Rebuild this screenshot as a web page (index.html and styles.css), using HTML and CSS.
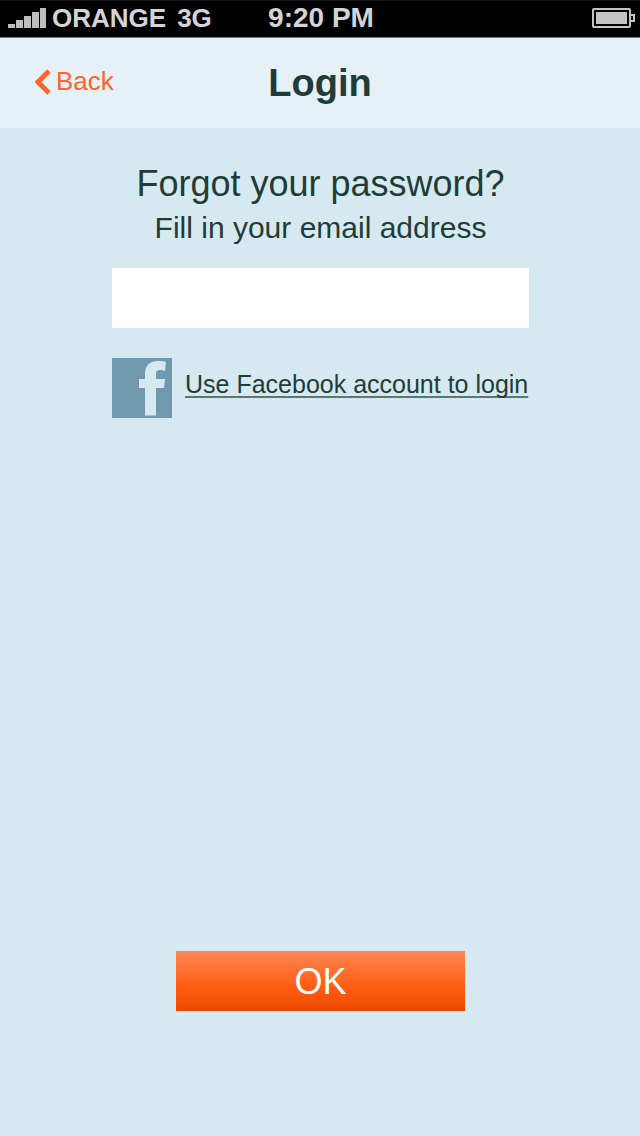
FILE: index.html
```html
<!DOCTYPE html>
<html lang="en">
<head>
<meta charset="utf-8">
<meta name="viewport" content="width=device-width">
<title>Login</title>
<link rel="stylesheet" href="styles.css">
</head>
<body>
<div class="status">
  <div class="carrier">
    <svg class="signal" width="40" height="22" viewBox="0 0 40 22" fill="#bfbfbf" aria-hidden="true">
      <rect x="1" y="17" width="7" height="4"/><rect x="9" y="13" width="7" height="8"/><rect x="17" y="9" width="7" height="12"/><rect x="25" y="5" width="7" height="16"/><rect x="33" y="1" width="6" height="20"/>
    </svg>
    <span>ORANGE</span>
    <span class="network">3G</span>
  </div>
  <time class="clock">9:20 PM</time>
  <svg class="battery" width="43" height="20" viewBox="0 0 43 20" fill="none" aria-hidden="true">
    <rect x="1" y="1" width="37" height="18" rx="1" stroke="#c4c4c4" stroke-width="2"/>
    <rect x="4" y="4" width="31" height="12" fill="#c4c4c4"/>
    <path d="M39 7h3v6h-3" stroke="#c4c4c4" stroke-width="2"/>
  </svg>
</div>
<header class="header">
  <a class="back" href="#">
    <svg width="16" height="26" viewBox="0 0 16 26" fill="none" aria-hidden="true"><path d="M14 2 3 13l11 11" stroke="#ff6428" stroke-width="5"/></svg>
    <span>Back</span>
  </a>
  <h1 class="title">Login</h1>
</header>
<form class="content">
  <h2 class="question">Forgot your password?</h2>
  <label class="hint" for="email">Fill in your email address</label>
  <input class="email" id="email" type="email">
  <a class="facebook" href="#">
    <svg width="60" height="60" viewBox="0 0 60 60" aria-hidden="true"><rect width="60" height="60" fill="#7099ad"/><path d="M33 57.500V30h-6v-9h6v-5C33 7 38 3 46 3c4 0 6 0 8 1l-1 9c-2-.5-3-1-4-1-4 0-5 1-5 4v5h9l-1 9h-8v27.500Z" fill="#d6e9f1"/></svg>
    <span class="facebook-text">Use Facebook account to login</span>
  </a>
  <button class="ok" type="button">OK</button>
</form>
</body>
</html>
```
FILE: styles.css
```css
* { box-sizing: border-box; }
body {
  margin: 0;
  min-height: 100vh;
  display: flex;
  flex-direction: column;
  background: #d6e9f1;
  color: #213c38;
  font-family: "Liberation Sans", Arial, sans-serif;
}
.status {
  display: grid;
  grid-template-columns: 1fr auto 1fr;
  align-items: center;
  height: 38px;
  padding: 0 5px 3px 7px;
  background: #000;
  border-top: 1px solid #151515;
  border-bottom: 1px solid #777b7e;
  color: #d4d4d4;
  font-size: 26px;
  font-weight: bold;
  line-height: 32px;
}
.carrier { display: flex; align-items: center; gap: 5px; }
.network { margin-left: 6px; }
.clock { font-size: 28px; }
.battery { justify-self: end; }
.header {
  display: grid;
  grid-template-columns: 1fr auto 1fr;
  align-items: center;
  height: 90px;
  padding: 0 35px;
  background: #e6f1f7;
}
.back {
  display: flex;
  align-items: center;
  gap: 5px;
  padding-bottom: 3px;
  color: #ff6428;
  font-size: 26px;
  text-decoration: none;
}
.title { margin: 0; font-size: 38px; line-height: 44px; }
.content {
  flex: 1;
  display: flex;
  flex-direction: column;
  align-items: center;
  padding: 34px 111px 125px 112px;
}
.question { margin: 0; font-size: 36px; font-weight: normal; line-height: 44px; }
.hint { font-size: 30px; line-height: 44px; }
.email {
  width: 100%;
  height: 60px;
  margin: 18px 0 30px;
  padding: 0 12px;
  border: 0;
  border-radius: 0;
  background: #fff;
  font: inherit;
  font-size: 30px;
}
.facebook {
  display: flex;
  align-items: center;
  align-self: flex-start;
  gap: 13px;
  color: inherit;
  font-size: 25px;
  text-decoration: none;
}
.facebook-text {
  padding-bottom: 8px;
  white-space: nowrap;
  text-decoration: underline 2px #5c7673;
  text-underline-offset: 3px;
  text-decoration-skip-ink: none;
}
.ok {
  width: 289px;
  height: 60px;
  margin-top: auto;
  padding: 2px 0 0;
  border: 0;
  background: linear-gradient(#ff8853, #ff5c14 60%, #eb4800);
  color: #fff;
  font: inherit;
  font-size: 36px;
}
```
